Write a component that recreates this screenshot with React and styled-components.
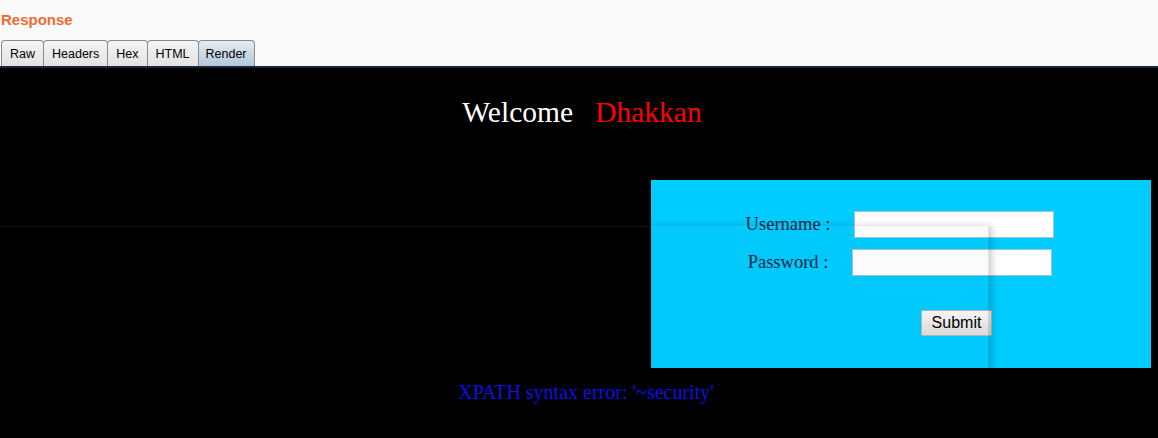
import React from "react";
import styled, { createGlobalStyle } from "styled-components";

const tabs = ["Raw", "Headers", "Hex", "HTML", "Render"];

const App = () => {
  return (
    <Page>
      <GlobalStyle />
      <Header>
        <Title>Response</Title>
        <TabBar>
          {tabs.map((tab) => (
            <Tab key={tab} $active={tab === "Render"}>
              {tab}
            </Tab>
          ))}
        </TabBar>
      </Header>
      <RenderArea>
        <Welcome>
          Welcome&nbsp;&nbsp;&nbsp;<Name>Dhakkan</Name>
        </Welcome>
        <LoginBox>
          <FormGrid>
            <Label>Username :</Label>
            <Input type="text" />
            <Label>Password :</Label>
            <Input type="password" $shift={-2} />
            <Submit type="button">Submit</Submit>
          </FormGrid>
        </LoginBox>
        <ErrorText>XPATH syntax error: '~security'</ErrorText>
        <Ghost />
      </RenderArea>
    </Page>
  );
};

const GlobalStyle = createGlobalStyle`
  html, body {
    margin: 0;
    padding: 0;
    background: #000;
  }
  body {
    font-family: "Liberation Sans", Arial, sans-serif;
    overflow: hidden;
  }
`;

const Page = styled.div`
  width: 1158px;
  height: 438px;
  display: flex;
  flex-direction: column;
  overflow: hidden;
`;

const Header = styled.header`
  background: #fafafa;
  padding-top: 11px;
  display: flex;
  flex-direction: column;
`;

const Title = styled.div`
  color: #f26a33;
  font-weight: bold;
  font-size: 15px;
  line-height: 18px;
  padding-left: 1px;
  height: 28px;
`;

const TabBar = styled.nav`
  display: flex;
  padding-left: 1px;
  height: 27px;
  align-items: flex-end;
`;

const Tab = styled.div`
  height: 26px;
  box-sizing: border-box;
  padding: 0 ${(p) => (p.$active ? "7px" : "8px")};
  display: flex;
  align-items: center;
  justify-content: center;
  font-size: 12.5px;
  color: #000;
  border: 1px solid #8a8a8a;
  border-bottom: none;
  border-radius: 4px 4px 0 0;
  margin-right: -1px;
  background: ${(p) =>
    p.$active
      ? "linear-gradient(#e4ecf3, #b3c7da)"
      : "linear-gradient(#f4f4f4, #e2e2e2)"};
`;

const RenderArea = styled.main`
  position: relative;
  flex: 1;
  background: #000;
  border-top: 2px solid #1c2536;
  display: flex;
  flex-direction: column;
`;

const Welcome = styled.div`
  margin-top: 28px;
  padding-left: 6px;
  text-align: center;
  color: #fff;
  font-family: "Liberation Serif", "Times New Roman", serif;
  font-size: 29.5px;
  line-height: 32px;
`;

const Name = styled.span`
  color: #ff0000;
`;

const LoginBox = styled.section`
  margin: 52px 0 0 651px;
  width: 500px;
  height: 188px;
  box-sizing: border-box;
  background: #00ccff;
  padding-top: 31px;
`;

const FormGrid = styled.div`
  display: grid;
  grid-template-columns: 86px 200px;
  column-gap: 23px;
  row-gap: 11px;
  margin-left: 94px;
`;

const Label = styled.div`
  font-family: "Liberation Serif", "Times New Roman", serif;
  font-size: 18.5px;
  line-height: 27px;
  color: #0b2545;
  text-align: center;
`;

const Input = styled.input`
  width: 200px;
  height: 27px;
  box-sizing: border-box;
  border: 1px solid #9fc3d6;
  background: #fff;
  margin: 0;
  margin-left: ${(p) => p.$shift || 0}px;
  padding: 0 4px;
  outline: none;
`;

const Submit = styled.button`
  grid-column: 2;
  justify-self: start;
  margin: 23px 0 0 67px;
  width: 71px;
  height: 26px;
  box-sizing: border-box;
  font-family: "Liberation Sans", Arial, sans-serif;
  font-size: 16px;
  color: #000;
  background: linear-gradient(#f7f7f7, #dcdcdc);
  border: 1px solid #b5b5b5;
  border-radius: 1px;
  padding: 0;
`;

const ErrorText = styled.div`
  margin-top: 13px;
  padding-left: 14px;
  text-align: center;
  color: #0f0fe8;
  font-family: "Liberation Serif", "Times New Roman", serif;
  font-size: 20px;
  line-height: 22px;
`;

const Ghost = styled.div`
  position: absolute;
  left: 0;
  top: 158px;
  width: 988px;
  bottom: 0;
  background: rgba(40, 40, 90, 0.015);
  border-top: 1px solid rgba(255, 255, 255, 0.06);
  border-right: 1px solid rgba(0, 0, 0, 0.1);
  box-shadow: 3px 0 7px rgba(0, 0, 0, 0.2);
  pointer-events: none;
`;

export default App;
